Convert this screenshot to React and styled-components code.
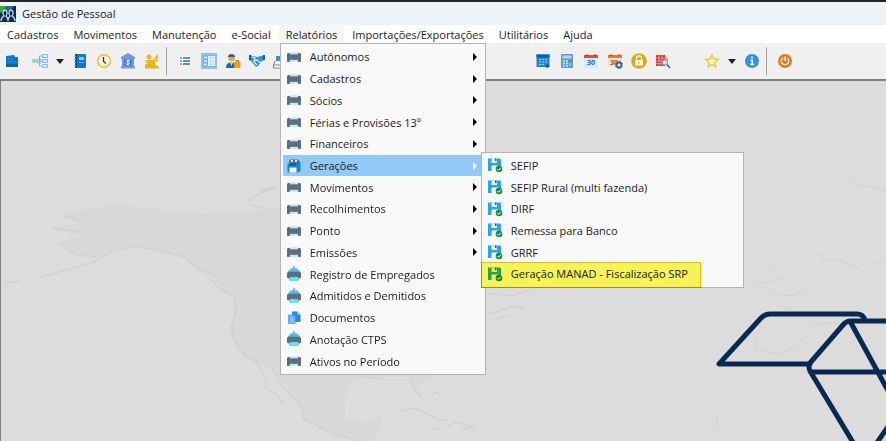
import styled, { createGlobalStyle } from "styled-components";

const GlobalStyle = createGlobalStyle`
  * {
    box-sizing: border-box;
  }

  body {
    margin: 0;
    background: #dcdcdc;
  }

  body, button {
    font-family: "Open Sans", "Noto Sans", sans-serif;
    font-size: 11px;
    color: #1c1c1c;
  }
`;

const Window = styled.div`
  display: flex;
  flex-direction: column;
  min-height: 100vh;
  overflow: hidden;
  border-top: 2px solid #262626;
`;

const TitleBar = styled.header`
  display: flex;
  align-items: center;
  gap: 6px;
  height: 23px;
  background: #edf3f7;
`;

const Title = styled.h1`
  margin: 0;
  font-size: 11px;
  font-weight: 400;
`;

const MenuBar = styled.nav`
  position: relative;
  z-index: 2;
  display: flex;
  gap: 1px;
  height: 18px;
  background: #ffffff;
`;

const MenuEntry = styled.div`
  position: relative;
`;

const MenuButton = styled.button`
  height: 18px;
  padding: 0 7px;
  border: 0;
  white-space: nowrap;
  background: ${props => (props.$open ? "#f6f6f6" : "transparent")};
`;

const Panel = styled.div`
  position: absolute;
  display: grid;
  grid-auto-rows: 1fr;
  padding: 2px;
  border: 1px solid #b4b4b4;
  background: #f9f9f9;
`;

const Dropdown = styled(Panel)`
  top: 100%;
  left: 1px;
  width: 206px;
  height: 332px;
`;

const Submenu = styled(Panel)`
  top: -3px;
  left: calc(100% - 2px);
  width: 263px;
  height: 136px;
`;

const Row = styled.div`
  position: relative;
  display: flex;
`;

const Item = styled.button`
  display: flex;
  flex: 1;
  align-items: center;
  gap: 8px;
  padding: 0 6px 0 3px;
  border: 0;
  text-align: left;
  white-space: nowrap;
  background: ${props => (props.$active ? "#91c9f7" : "transparent")};
`;

const Label = styled.span`
  flex: 1;
`;

const Marker = styled.span`
  position: absolute;
  inset: -1px auto -3px -3px;
  width: 220px;
  border: 1px solid #f5c000;
  background: #fbf85c;
  mix-blend-mode: multiply;
  pointer-events: none;
`;

const Toolbar = styled.div`
  display: flex;
  align-items: center;
  height: 36px;
  background: #f0f0f0;
`;

const Group = styled.div`
  display: flex;
  align-items: center;
  margin-left: ${props => props.$space || 0}px;
`;

const Tool = styled.button`
  display: flex;
  align-items: center;
  justify-content: center;
  width: ${props => (props.$narrow ? 16 : 24)}px;
  height: 24px;
  padding: 0;
  border: 0;
  background: transparent;
`;

const Divider = styled.span`
  width: 1px;
  height: 28px;
  margin: 0 2px;
  background: #a0a0a0;
`;

const Workspace = styled.main`
  position: relative;
  flex: 1;
  min-height: 200px;
  border-top: 2px solid #7f7f7f;
  border-left: 1px solid #7f7f7f;
  background: #dcdcdc;
`;

const Backdrop = styled.svg`
  position: absolute;
  inset: 0;
  width: 100%;
  height: 100%;
`;

const Svg = ({ size = 16, children }) => (
  <svg width={size} height={size} viewBox="0 0 16 16" fill="none" aria-hidden="true">
    {children}
  </svg>
);

const AppIcon = () => (
  <Svg>
    <rect width="16" height="16" fill="#0d2b4c" />
    <path d="M0 0h7L4 5 0 7z" fill="#3aa640" />
    <path d="M7 0h7l-3 4-5 1z" fill="#1470b8" />
    <path d="M1 15c0-3 1-4 3-5-2-2-1-6 1-6s3 4 1 6c1 1 2 2 2 5M8 15c0-3 1-4 2-5-2-2-1-6 1-6s3 4 1 6c2 1 3 2 3 5" stroke="#c9e2f2" strokeWidth="1.3" />
  </Svg>
);

const Printer = () => (
  <Svg>
    <path d="M4 3h8v3H4z" fill="#d5e6f0" />
    <path d="M4 5h8v1H4z" fill="#6d9cbb" />
    <path d="M1 5l1-1h2v2h8V4h2l1 1v8h-3v-2H4v2H1z" fill="#5f6e7a" />
    <path d="M4 11h8v2H4z" fill="#cde5f4" />
    <path d="M1 12h3v1H1zM12 12h3v1h-3z" fill="#5d87a6" />
    <path d="M4 10.500h8v.5H4z" fill="#5aa3d0" />
  </Svg>
);

const PrinterPaper = () => (
  <Svg>
    <path d="M1.500 6L5 2h6l3.500 4v5L12 15H4l-2.500-4z" fill="#4fd3ee" />
    <path d="M1 7l1.500-1.500h11L15 7v5h-3v-1H4v1H1z" fill="#5f6e7a" />
    <path d="M4 4h8v2H4z" fill="#35b9de" />
    <path d="M8 0v5" stroke="#a98fe6" strokeWidth="1.600" />
    <path d="M4 11h8v1.500l-1 2.500H5l-1-2.500z" fill="#5fe3f5" />
  </Svg>
);

const SaveAll = () => (
  <Svg>
    <path d="M3 4l1-2.500h8L14 4v3H3z" fill="#4c6f85" />
    <path d="M5 2h2v2H5zM9 2h2v2H9z" fill="#d6ebf7" />
    <path d="M1.500 5.500H12L14.500 4v9L12 14.500H1.500z" fill="#1585d0" />
    <path d="M3.500 9.500h7v5h-7z" fill="#f4fafe" />
    <path d="M4 5.500h6v2H4z" fill="#0d5c9c" />
  </Svg>
);

const Documents = () => (
  <Svg>
    <path d="M6 1.500h5.500l3 3V12H6z" fill="#2f86dc" />
    <path d="M11.500 1.500v3h3z" fill="#bfe0fa" />
    <path d="M2 4.500h5.500l2 2V14H2z" fill="#5aaef5" />
    <path d="M4 8h3M4 10h4M4 12h4" stroke="#a9d5fa" />
  </Svg>
);

const SaveCheck = () => (
  <Svg>
    <path d="M1 1.500h12l1 1V10h-3V8.500H5V14H1z" fill="#28a5e4" />
    <path d="M4.500 1.500H10V6H4.500z" fill="#e3eef4" />
    <path d="M8 1.500h1.500V4H8z" fill="#38566a" />
    <path d="M4.500 9H10v5H4.500z" fill="#f1f5f7" />
    <circle cx="12" cy="12" r="3.300" fill="#168c4b" />
    <path d="M10.300 12l1.300 1.300 2.200-2.500" stroke="#fff" />
  </Svg>
);

const Arrow = ({ color = "#000" }) => (
  <svg width="4" height="8" viewBox="0 0 4 8" aria-hidden="true">
    <path d="M0 0l4 4-4 4z" fill={color} />
  </svg>
);

const Caret = () => (
  <svg width="8" height="5" viewBox="0 0 8 5" aria-hidden="true">
    <path d="M0 0h8L4 5z" fill="#222" />
  </svg>
);

const Company = () => (
  <Svg>
    <path d="M2 3l8-1 1 2h3v10H2z" fill="#0b7ac9" />
    <path d="M2 11h12v3H2z" fill="#0863a8" />
    <path d="M4 6h1M7 6h1M4 8.500h1M7 8.500h1M10 8.500h1" stroke="#3ba0e6" />
  </Svg>
);

const Tree = () => (
  <Svg>
    <path d="M4 8h5M11 3H7.500v10H11" stroke="#8fb3d9" />
    <rect x="0" y="6" width="4" height="4" rx="1" fill="#a5d6a7" />
    <rect x="5" y="6" width="4" height="4" rx="1" stroke="#86b6e8" />
    <path d="M10.500 1.500h5v3h-5zM10.500 6.500h5v3h-5zM10.500 11.500h5v3h-5z" fill="#d8e9fa" stroke="#8ab9ec" />
  </Svg>
);

const Notebook = () => (
  <Svg>
    <rect x="3" y="1" width="11" height="14" rx="1" fill="#1078cf" />
    <path d="M3 1h2v14H3z" fill="#0a4f8f" />
    <path d="M2 3.500h2M2 6.500h2M2 9.500h2M2 12.500h2" stroke="#6fc0d8" />
    <path d="M7 4h5v3H7z" fill="#8cc6f4" />
    <path d="M7 9.500h5" stroke="#5aaef5" />
  </Svg>
);

const Clock = () => (
  <Svg>
    <circle cx="8" cy="8" r="6.300" fill="#fbf8ea" stroke="#eabf2c" strokeWidth="1.400" />
    <path d="M7.500 4v4.500l2.500 2" stroke="#333" strokeWidth="1.300" />
  </Svg>
);

const Bank = () => (
  <Svg>
    <path d="M8 0l7 4v2H1V4zM2 6h12v7H2zM1 13h14v2.500H1z" fill="#6d9be0" />
    <path d="M4 6h8v7H4z" fill="#4f80d0" />
    <path d="M10 7.500c-3-1.500-4 1.300-2 1.800 2.500.6 1.500 3.200-2 1.700M8 6.500v6" stroke="#e8f1fd" />
  </Svg>
);

const People = () => (
  <Svg>
    <circle cx="5" cy="4" r="2.500" fill="#e8b71a" />
    <path d="M1 7h8l3-4 2-2v3l-3 5v3l4 2v1.500H1V12h3z" fill="#e8b71a" />
    <circle cx="12" cy="7" r="2" fill="#f1c93c" />
    <path d="M1 12h6M9 11l5 3" stroke="#d6a516" />
  </Svg>
);

const List = () => (
  <Svg>
    <path d="M2.500 3h11v10h-11z" fill="#fff" />
    <path d="M3 5h2M3 8h2M3 11h2" stroke="#39a5a8" strokeWidth="1.500" />
    <path d="M6 5h7M6 8h7M6 11h7" stroke="#2a6f9e" strokeWidth="1.500" />
  </Svg>
);

const Detail = () => (
  <Svg>
    <rect width="16" height="16" fill="#8fc0f0" />
    <rect x="2" y="2" width="12" height="12" fill="#78b1ec" />
    <path d="M3 4.500h3M3 8h3M3 11.500h3" stroke="#dcedfc" strokeWidth="1.600" />
    <path d="M7 3h7v10H7z" fill="#e7f3fe" />
    <path d="M8 5h5M8 8h5M8 11h5" stroke="#9cc7f2" />
  </Svg>
);

const Worker = () => (
  <Svg>
    <circle cx="6.500" cy="5" r="3.300" fill="#f1a64a" />
    <path d="M3 4c0-4 7-4 7 0z" fill="#2b5e94" />
    <path d="M1 15c0-4 2-5.500 5.500-5.500S12 11 12 15z" fill="#2168a8" />
    <path d="M5 9.500h3L6.500 13z" fill="#f6d3a2" />
    <rect x="9" y="9" width="6.500" height="6" rx="1" fill="#ef9d21" />
    <path d="M11 9V7.500h2.500V9" stroke="#b86b0b" />
  </Svg>
);

const Handshake = () => (
  <Svg>
    <path d="M0 2l4 1 4 1 4-1 4-1v5l-3 1-4 5-2 1-5-6-2-1z" fill="#3d8ecf" />
    <path d="M3 4l3 1-1 3 3-1 4 3M5 9l3 3" stroke="#e8f4fd" strokeWidth="1.200" />
    <path d="M0 2h2v5H0zM14 2h2v5h-2z" fill="#1b5d9c" />
  </Svg>
);

const Scanner = () => (
  <Svg>
    <path d="M3 3h9v6H3z" fill="#2f8fe0" />
    <path d="M2 8l-1.500 4v3h15v-3L14 8" fill="#fff" stroke="#6f7a83" />
    <path d="M1 12h14" stroke="#6f7a83" />
  </Svg>
);

const Schedule = () => (
  <Svg>
    <path d="M1.500 1.500h13V14h-13z" fill="#1c87d6" />
    <path d="M1.500 1.500h13v3h-13z" fill="#0a5fa8" />
    <path d="M4 6.500h2M7 6.500h2M10 6.500h2M4 9h2M7 9h2M10 9h2M4 11.500h2M7 11.500h2" stroke="#a5d3f5" />
    <path d="M12.500 11v4M10.500 13h4" stroke="#135c8c" strokeWidth="1.600" />
  </Svg>
);

const Calculator = () => (
  <Svg>
    <rect x="2" y="1" width="12" height="14" rx="1" fill="#5a9bd0" />
    <path d="M3.500 2.500h9v3h-9z" fill="#b5d6ee" />
    <path d="M4 8h2M7 8h2M4 10.500h2M7 10.500h2M4 13h2M7 13h2" stroke="#d2e7f6" strokeWidth="1.400" />
    <path d="M10 8h2.500" stroke="#b0605c" strokeWidth="1.400" />
    <path d="M10 11.700h2.500" stroke="#85b9e0" strokeWidth="3" />
  </Svg>
);

const Day = styled.text`
  font: 700 7px "Open Sans", sans-serif;
`;

const CalendarDay = () => (
  <Svg>
    <rect x="1" y="2" width="14" height="13" rx="1" fill="#d7eafa" />
    <path d="M1 2h14v3H1z" fill="#df4b3f" />
    <path d="M4 1v2M12 1v2" stroke="#8e2f2a" />
    <Day x="8" y="12" textAnchor="middle" fill="#1f66a8">30</Day>
  </Svg>
);

const CalendarGear = () => (
  <Svg>
    <rect x="1" y="2" width="14" height="12" rx="1" fill="#e5e2de" />
    <path d="M1 2h14v3H1z" fill="#e9762f" />
    <path d="M4 1v2M12 1v2" stroke="#a34d18" />
    <Day x="7" y="12" textAnchor="middle" fill="#c4452f">30</Day>
    <circle cx="12" cy="12" r="2.500" stroke="#4d6573" strokeWidth="1.800" fill="#dfe6ea" />
    <circle cx="12" cy="12" r="3.700" stroke="#4d6573" strokeDasharray="1.400 1.500" />
  </Svg>
);

const Lock = () => (
  <Svg>
    <circle cx="8" cy="8" r="7.800" fill="#e0a919" />
    <path d="M5.500 7V5.500a2.500 2.500 0 015 0V7" stroke="#fff7df" strokeWidth="1.300" />
    <rect x="4" y="7" width="8" height="5.500" fill="#fff7df" />
    <path d="M8 8.500v2" stroke="#e0a919" strokeWidth="1.300" />
  </Svg>
);

const TableSearch = () => (
  <Svg>
    <path d="M1 2h9v11H1z" fill="#d93a3a" />
    <path d="M1 5h9M1 8h9M1 10.500h9M4 2v11M7 2v11" stroke="#f4aaa6" strokeWidth=".7" />
    <path d="M10 3l3 2v5h-3z" fill="#f2b632" />
    <circle cx="10" cy="9.500" r="2.700" fill="#c9e5f5" stroke="#5796bd" />
    <path d="M12 11.500l3 3.500" stroke="#54616b" strokeWidth="1.600" />
  </Svg>
);

const Star = () => (
  <Svg>
    <path d="M8 2l1.800 4 4.400.4-3.300 2.900 1 4.300L8 11.300l-3.900 2.300 1-4.300-3.300-2.900L6.200 6z" fill="#fff6d0" stroke="#f4c52e" strokeWidth="1.400" />
  </Svg>
);

const Info = () => (
  <Svg>
    <circle cx="8" cy="8" r="7" fill="#3391d8" />
    <path d="M8 3.500v2M6.500 7.200H8.300v4.300M6.200 11.500h4" stroke="#fff" strokeWidth="1.500" />
  </Svg>
);

const Power = () => (
  <Svg>
    <circle cx="8" cy="8" r="7" fill="#e27c22" />
    <path d="M5.800 5a3.700 3.700 0 104.400 0M8 3.500V8" stroke="#fff" strokeWidth="1.300" />
  </Svg>
);

const World = () => (
  <Backdrop viewBox="1 81 885 360" preserveAspectRatio="xMinYMin slice" fill="none" aria-hidden="true">
    <path
      d="M64 215Q90 205 126 206L165 210 200 213 240 211 290 207 440 250 440 370 414 390 410 377 362 377 350 384 344 404 346 422 366 423 384 413 380 425 374 441H360L340 436 305 420 302 405 272 368 256 362 244 357 234 345 230 330 234 311 233 296 220 290 206 276 186 258 164 251 142 247 115 253 96 259 70 252 58 243 80 236 52 228 82 222z"
      fill="#d8d8d8"
    />
    <g stroke="#d1d1d1" strokeWidth="1.500" strokeLinejoin="round">
      <path d="M142 247l20 4 22 6 14 12 14 4 8 10 8 4M220 290l15 6 1 15-5 16 4 14 10 15 12 6 10 20" />
      <path d="M63 216l20 6M52 228l32 4M58 243l18 12 20 2M38 278l28-8 26-7 20-12M5 283l14-2M122 250l8-4 10 1" />
      <path d="M246 203l14-10 18-6M250 206l16 1M262 190l16-3M272 368l10 18 19 19 3 14 34 17 12 2 8 5M264 386l12 8 8 10" />
      <path d="M362 377l22 2M410 377l4 12 7 7M402 411l12-3 14 6 10 6 10 0M446 427l10-5 18 5-12 2M428 429h9M430 392l8 1" />
      <path d="M487 293l25 3 18-6M490 314l22-8 12 2M497 319l12-3" />
    </g>
    <g stroke="#d2d2d2">
      <path d="M852 182l14 4 20 4M822 252v10l14-3 16 6 12 8 10-10 12-4M840 270v6M862 222h4" />
      <path d="M767 266l6 6M753 286l20-6 12-2M772 294l20 2 12-7M778 305l12 4" />
      <path d="M812 325c14-3 30-1 42-1M755 340l2 9 16 4c14-1 24-6 28-13l12-6M845 358v4M717 416v12" />
    </g>
    <g stroke="#0a2952" strokeWidth="5" strokeLinecap="round" strokeLinejoin="round">
      <path d="M865 320q-2-6-8-6H770q-5 0-9 4L719 364H810" />
      <path d="M890 321H851q-5 0-8 4L810 363q-2 3 0 8L854 444" />
      <path d="M851 323L892 398M811 372H892M876 444L892 421" />
    </g>
  </Backdrop>
);

const menus = ["Cadastros", "Movimentos", "Manutenção", "e-Social", "Relatórios", "Importações/Exportações", "Utilitários", "Ajuda"];

const reports = [
  { label: "Autônomos", icon: Printer, more: true },
  { label: "Cadastros", icon: Printer, more: true },
  { label: "Sócios", icon: Printer, more: true },
  { label: "Férias e Provisões 13º", icon: Printer, more: true },
  { label: "Financeiros", icon: Printer, more: true },
  { label: "Gerações", icon: SaveAll, more: true, active: true },
  { label: "Movimentos", icon: Printer, more: true },
  { label: "Recolhimentos", icon: Printer, more: true },
  { label: "Ponto", icon: Printer, more: true },
  { label: "Emissões", icon: Printer, more: true },
  { label: "Registro de Empregados", icon: PrinterPaper },
  { label: "Admitidos e Demitidos", icon: PrinterPaper },
  { label: "Documentos", icon: Documents },
  { label: "Anotação CTPS", icon: PrinterPaper },
  { label: "Ativos no Período", icon: Printer },
];

const exportsList = ["SEFIP", "SEFIP Rural (multi fazenda)", "DIRF", "Remessa para Banco", "GRRF", "Geração MANAD - Fiscalização SRP"];

const renderTools = (tools) =>
  tools.map(([name, Icon]) => (
    <Tool key={name} aria-label={name} $narrow={Icon === Caret}>
      <Icon />
    </Tool>
  ));

const GenerationsMenu = () => (
  <Submenu>
    {exportsList.map((label, index) => (
      <Row key={label}>
        <Item>
          <SaveCheck />
          <Label>{label}</Label>
        </Item>
        {index === exportsList.length - 1 && <Marker />}
      </Row>
    ))}
  </Submenu>
);

const ReportsMenu = () => (
  <Dropdown>
    {reports.map(({ label, icon: Icon, more, active }) => (
      <Row key={label}>
        <Item $active={active}>
          <Icon />
          <Label>{label}</Label>
          {more && <Arrow color={active ? "#fff" : "#000"} />}
        </Item>
        {active && <GenerationsMenu />}
      </Row>
    ))}
  </Dropdown>
);

const App = () => {
  return (
    <Window>
      <GlobalStyle />
      <TitleBar>
        <AppIcon />
        <Title>Gestão de Pessoal</Title>
      </TitleBar>
      <MenuBar>
        {menus.map(label => (
          <MenuEntry key={label}>
            <MenuButton $open={label === "Relatórios"}>{label}</MenuButton>
            {label === "Relatórios" && <ReportsMenu />}
          </MenuEntry>
        ))}
      </MenuBar>
      <Toolbar>
        <Group>{renderTools([["Empresa", Company]])}</Group>
        <Group $space={4}>
          {renderTools([
            ["Estrutura", Tree],
            ["Mais estruturas", Caret],
            ["Agenda", Notebook],
            ["Horários", Clock],
            ["Bancos", Bank],
            ["Funcionários", People],
          ])}
        </Group>
        <Divider />
        <Group $space={4}>
          {renderTools([
            ["Lista", List],
            ["Detalhes", Detail],
            ["Admissão", Worker],
            ["Acordos", Handshake],
            ["Digitalizar", Scanner],
          ])}
        </Group>
        <Group $space={238}>
          {renderTools([
            ["Agendamento", Schedule],
            ["Calculadora", Calculator],
            ["Calendário", CalendarDay],
            ["Configurar calendário", CalendarGear],
            ["Bloqueio", Lock],
            ["Consulta", TableSearch],
          ])}
        </Group>
        <Group $space={25}>
          {renderTools([
            ["Favoritos", Star],
            ["Mais favoritos", Caret],
            ["Informações", Info],
          ])}
        </Group>
        <Divider />
        <Group $space={4}>{renderTools([["Sair", Power]])}</Group>
      </Toolbar>
      <Workspace>
        <World />
      </Workspace>
    </Window>
  );
};

export default App;
